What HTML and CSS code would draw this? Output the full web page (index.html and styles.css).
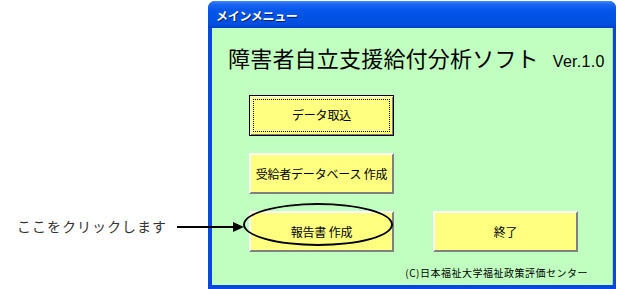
FILE: index.html
```html
<!DOCTYPE html>
<html lang="ja">
<head>
<meta charset="utf-8">
<link rel="stylesheet" href="styles.css">
</head>
<body>
<div class="page">
  <div class="side">
    <div class="note">ここをクリックします</div>
  </div>
  <div class="window">
    <div class="titlebar">メインメニュー</div>
    <div class="client">
      <div class="title">障害者自立支援給付分析ソフト<span class="ver">Ver.1.0</span></div>
      <div class="grid">
        <div class="btn default"><span class="focus">データ取込</span></div>
        <div class="cell"></div>
        <div class="btn">受給者データベース&nbsp;作成</div>
        <div class="cell"></div>
        <div class="btn mark">報告書&nbsp;作成<span class="ellipse"></span></div>
        <div class="btn">終了</div>
      </div>
      <div class="copy">(C)日本福祉大学福祉政策評価センター</div>
    </div>
  </div>
  <svg class="arrow" width="70" height="12" viewBox="0 0 70 12">
    <line x1="0" y1="6" x2="58" y2="6" stroke="#000" stroke-width="2"/>
    <polygon points="56,1 67,6 56,11" fill="#000"/>
  </svg>
</div>
</body>
</html>
```

FILE: styles.css
```css
html, body {
  margin: 0;
  padding: 0;
  background: #fff;
}
body {
  font-family: "Noto Sans CJK JP", "DejaVu Sans", sans-serif;
}
.page {
  position: relative;
  display: flex;
  width: 618px;
  height: 289px;
  overflow: hidden;
}
.side {
  width: 208px;
  flex: none;
  display: flex;
  align-items: flex-start;
}
.note {
  margin-top: 216px;
  margin-left: 17px;
  font-size: 14px;
  letter-spacing: 1px;
  color: #333;
  line-height: 20px;
  white-space: nowrap;
}
.window {
  margin-top: 1px;
  width: 408px;
  height: 288px;
  flex: none;
  display: flex;
  flex-direction: column;
  background: #0848e0;
  border-radius: 7px 7px 0 0;
  overflow: hidden;
}
.titlebar {
  height: 27px;
  flex: none;
  background: linear-gradient(#3c8cf8 0%, #1a64f0 12%, #0656ea 35%, #0052e4 60%, #0250e0 85%, #0140c8 100%);
  color: #fff;
  font-weight: bold;
  font-size: 12px;
  line-height: 29px;
  padding-left: 8px;
  letter-spacing: -0.3px;
  text-shadow: 1px 1px 0 #0a1e6a;
}
.client {
  flex: 1;
  margin: 0 3px 4px 4px;
  background: #c0ffc0;
  display: flex;
  flex-direction: column;
  box-shadow: inset -1px 0 0 #9fe09f;
}
.title {
  margin-top: 15px;
  margin-left: 16px;
  font-size: 22px;
  line-height: 28px;
  color: #000;
  white-space: nowrap;
  letter-spacing: 0.2px;
}
.ver {
  font-family: "Liberation Sans", sans-serif;
  font-size: 16px;
  margin-left: 14px;
  letter-spacing: 0.3px;
}
.grid {
  margin-top: 19px;
  margin-left: 37px;
  display: grid;
  grid-template-columns: 145px 145px;
  grid-auto-rows: 41px;
  column-gap: 39px;
  row-gap: 17px;
}
.btn {
  position: relative;
  box-sizing: border-box;
  background: #ffff80;
  border: 2px solid;
  border-color: #fff #808080 #808080 #fff;
  display: flex;
  align-items: center;
  justify-content: center;
  font-size: 12px;
  letter-spacing: -0.2px;
  color: #000;
  white-space: nowrap;
}
.btn.default {
  border: 1px solid #000;
  box-shadow: inset 1px 1px 0 #fff, inset -1px -1px 0 #808080;
  padding: 3px;
}
.focus {
  box-sizing: border-box;
  width: 100%;
  height: 100%;
  border: 1px dotted #000;
  display: flex;
  align-items: center;
  justify-content: center;
  padding-bottom: 2px;
}
.ellipse {
  position: absolute;
  left: -8px;
  top: -10px;
  width: 150px;
  height: 43px;
  border: 2px solid #000;
  border-radius: 50%;
  box-sizing: border-box;
  pointer-events: none;
}
.copy {
  margin-top: auto;
  margin-bottom: 5px;
  margin-right: 25px;
  align-self: flex-end;
  font-size: 10px;
  line-height: 14px;
  letter-spacing: 0.5px;
  white-space: nowrap;
}
.arrow {
  position: absolute;
  left: 177px;
  top: 221px;
}
```
